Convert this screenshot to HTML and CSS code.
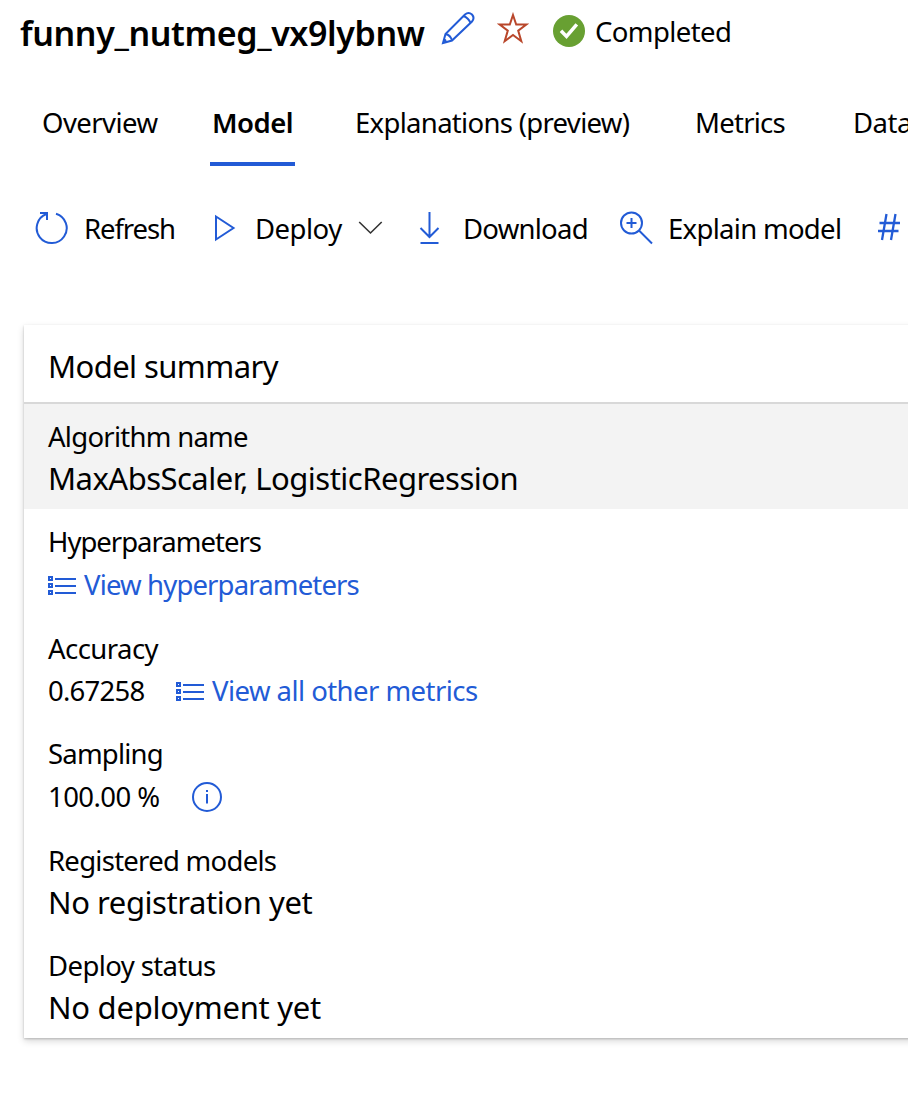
FILE: index.html
```html
<!DOCTYPE html>
<html lang="en">
<head>
<meta charset="utf-8">
<title>funny_nutmeg_vx9lybnw</title>
<link rel="stylesheet" href="styles.css">
</head>
<body>
<header class="header">
  <h1 class="title">funny_nutmeg_vx9lybnw</h1>
  <svg class="icon edit" width="34" height="34" viewBox="0 0 34 34"><path d="M2 32 4.500 23 24 3.500Q27.500 .5 31 3.500 34 7 31 10.500L11 29.500ZM4.500 23Q9.500 24 11 29.500M22.500 5Q27.500 7 29.500 12M5 30 3.500 28.500"/></svg>
  <svg class="icon star" width="32" height="32" viewBox="0 0 32 32"><path d="M16 3 19.200 12.500H29.300L21.200 18.600 24.300 29.200 16 23 7.700 29.200 10.800 18.600 2.700 12.500H12.800Z"/></svg>
  <svg class="done" width="32" height="32" viewBox="0 0 32 32"><circle cx="16" cy="16" r="16"/><path d="M8 15.800 13.500 21.500 23.800 9.300"/></svg>
  <span class="status">Completed</span>
</header>
<nav class="tabs">
  <a class="tab overview">Overview</a>
  <a class="tab model">Model</a>
  <a class="tab explanations">Explanations (preview)</a>
  <a class="tab metrics">Metrics</a>
  <a class="tab data">Data</a>
</nav>
<div class="toolbar">
  <button class="command refresh"><svg class="icon" width="34" height="34" viewBox="0 0 34 34"><path d="M21 2.700A15 15 0 1 1 11.500 3M5 2H12V9"/></svg><span>Refresh</span></button>
  <button class="command deploy"><svg class="icon" width="24" height="34" viewBox="0 0 24 34"><path d="M4 5.500V28.500L21.500 17Z"/></svg><span>Deploy</span><svg class="icon chevron" width="26" height="34" viewBox="0 0 26 34"><path d="M1.200 11 12.500 22 23.700 11"/></svg></button>
  <button class="command download"><svg class="icon" width="24" height="34" viewBox="0 0 24 34"><path d="M11.500 1V26M2.500 17 11.500 26 20.500 17M2.500 32H20.500"/></svg><span>Download</span></button>
  <button class="command explain"><svg class="icon" width="34" height="34" viewBox="0 0 34 34"><circle cx="12.500" cy="12" r="10.500"/><path d="M12.500 7V17M7.500 12H17.500M20 19.500 33 32.500"/></svg><span>Explain model</span></button>
  <button class="command register"><svg class="icon" width="24" height="34" viewBox="0 0 24 34"><path d="M9.500 3 5 29M18.500 3 14 29M2.500 12H23M1 20H21.500"/></svg></button>
</div>
<section class="card">
  <h2 class="card-title">Model summary</h2>
  <div class="row shaded"><div class="label algorithm">Algorithm name</div><div class="value large scaler">MaxAbsScaler, LogisticRegression</div></div>
  <div class="row tall"><div class="label hyper">Hyperparameters</div><div class="value link"><svg class="list" width="30" height="22" viewBox="0 0 30 22"><path d="M1 2H4V5H1ZM1 9H4V12H1ZM1 16H4V19H1ZM7 4H28M7 11H28M7 18H28"/></svg><span class="view-hyper">View hyperparameters</span></div></div>
  <div class="row"><div class="label accuracy">Accuracy</div><div class="value metric-value"><span class="score">0.67258</span><span class="link"><svg class="list" width="30" height="22" viewBox="0 0 30 22"><path d="M1 2H4V5H1ZM1 9H4V12H1ZM1 16H4V19H1ZM7 4H28M7 11H28M7 18H28"/></svg><span class="view-metrics">View all other metrics</span></span></div></div>
  <div class="row tall"><div class="label sampling">Sampling</div><div class="value"><span class="percent">100.00 %</span><svg class="icon" width="32" height="32" viewBox="0 0 32 32"><circle cx="16" cy="16" r="14"/><path d="M16 13V22.500M16 9V11"/></svg></div></div>
  <div class="row"><div class="label registered">Registered models</div><div class="value large no-reg">No registration yet</div></div>
  <div class="row"><div class="label deploy-status">Deploy status</div><div class="value large no-deploy">No deployment yet</div></div>
</section>
</body>
</html>
```
FILE: styles.css
```css
* { box-sizing: border-box; }
body {
  margin: 0;
  width: 908px;
  height: 1098px;
  overflow: hidden;
  background: #fff;
  color: #000;
  font: 27.5px/42px "Noto Sans", "Open Sans", sans-serif;
  white-space: nowrap;
}
svg { flex: none; fill: none; }
.icon { stroke: #225bd6; stroke-width: 2; }
.header { display: flex; height: 66px; padding-left: 20px; }
.title { width: 421px; margin: 12px 0 0; font-size: 34px; line-height: 42px; font-weight: 600; letter-spacing: -.38px; }
.edit { margin-top: 11px; }
.star { margin: 12px 0 0 22px; stroke: #b9472b; }
.done { margin: 15px 0 0 24px; }
.done circle { fill: #68a032; }
.done path { stroke: #fff; stroke-width: 3.5; }
.status { margin: 11px 0 0 10px; letter-spacing: -.6px; }
.tabs { display: flex; height: 100px; padding-top: 36px; }
.tab { flex: none; height: 64px; }
.overview { width: 168px; margin-left: 42px; letter-spacing: -.55px; }
.model { width: 85px; padding-left: 2px; border-bottom: 4px solid #225bd6; font-weight: 600; letter-spacing: -.5px; }
.explanations { width: 340px; margin-left: 60px; letter-spacing: -.69px; }
.metrics { width: 158px; letter-spacing: -.75px; }
.data { letter-spacing: -.5px; }
.toolbar { display: flex; height: 159px; padding: 42px 0 0 35px; }
.command { display: flex; flex: none; padding: 0; border: 0; background: none; color: inherit; font: inherit; height: 42px; }
.command svg { margin-top: 3px; }
.refresh { width: 177px; gap: 15px; letter-spacing: -1.1px; }
.deploy { width: 206px; gap: 19px; letter-spacing: -.5px; }
.deploy span { width: 84px; }
.deploy .chevron { stroke: #333; stroke-width: 1.6; }
.download { width: 201px; gap: 21px; letter-spacing: -.75px; }
.explain { width: 258px; gap: 15px; letter-spacing: -.7px; }
.register .icon { stroke-width: 2.3; }
.card { margin-left: 24px; width: 900px; height: 713px; background: #fff; box-shadow: 0 3px 7px rgba(0,0,0,.16), 0 1px 2px rgba(0,0,0,.2); }
.card-title { height: 79px; margin: 0; padding: 20px 0 0 24px; border-bottom: 2px solid #d8d8d8; font-size: 31px; font-weight: 400; letter-spacing: -.58px; }
.row { height: 105px; padding: 11px 0 0 24px; line-height: 43px; }
.tall { height: 107px; }
.shaded { background: #f3f3f3; }
.value { display: flex; align-items: center; height: 43px; }
.metric-value { height: 41px; }
.large { font-size: 31px; line-height: 40px; align-items: flex-start; }
.link { display: flex; align-items: center; color: #225bd6; }
.list { margin-right: 6px; margin-top: 3px; stroke: #225bd6; stroke-width: 2; }
.score { width: 128px; letter-spacing: -.75px; }
.percent { width: 143px; letter-spacing: -.55px; }
.algorithm { letter-spacing: -.73px; }
.scaler { letter-spacing: -.52px; }
.hyper { letter-spacing: -1px; }
.view-hyper { letter-spacing: -.85px; }
.accuracy { letter-spacing: -.55px; }
.view-metrics { letter-spacing: -.55px; }
.sampling { letter-spacing: -.8px; }
.registered { letter-spacing: -.73px; }
.no-reg { letter-spacing: -.43px; }
.deploy-status { letter-spacing: -.6px; }
.no-deploy { letter-spacing: -.25px; }
```
